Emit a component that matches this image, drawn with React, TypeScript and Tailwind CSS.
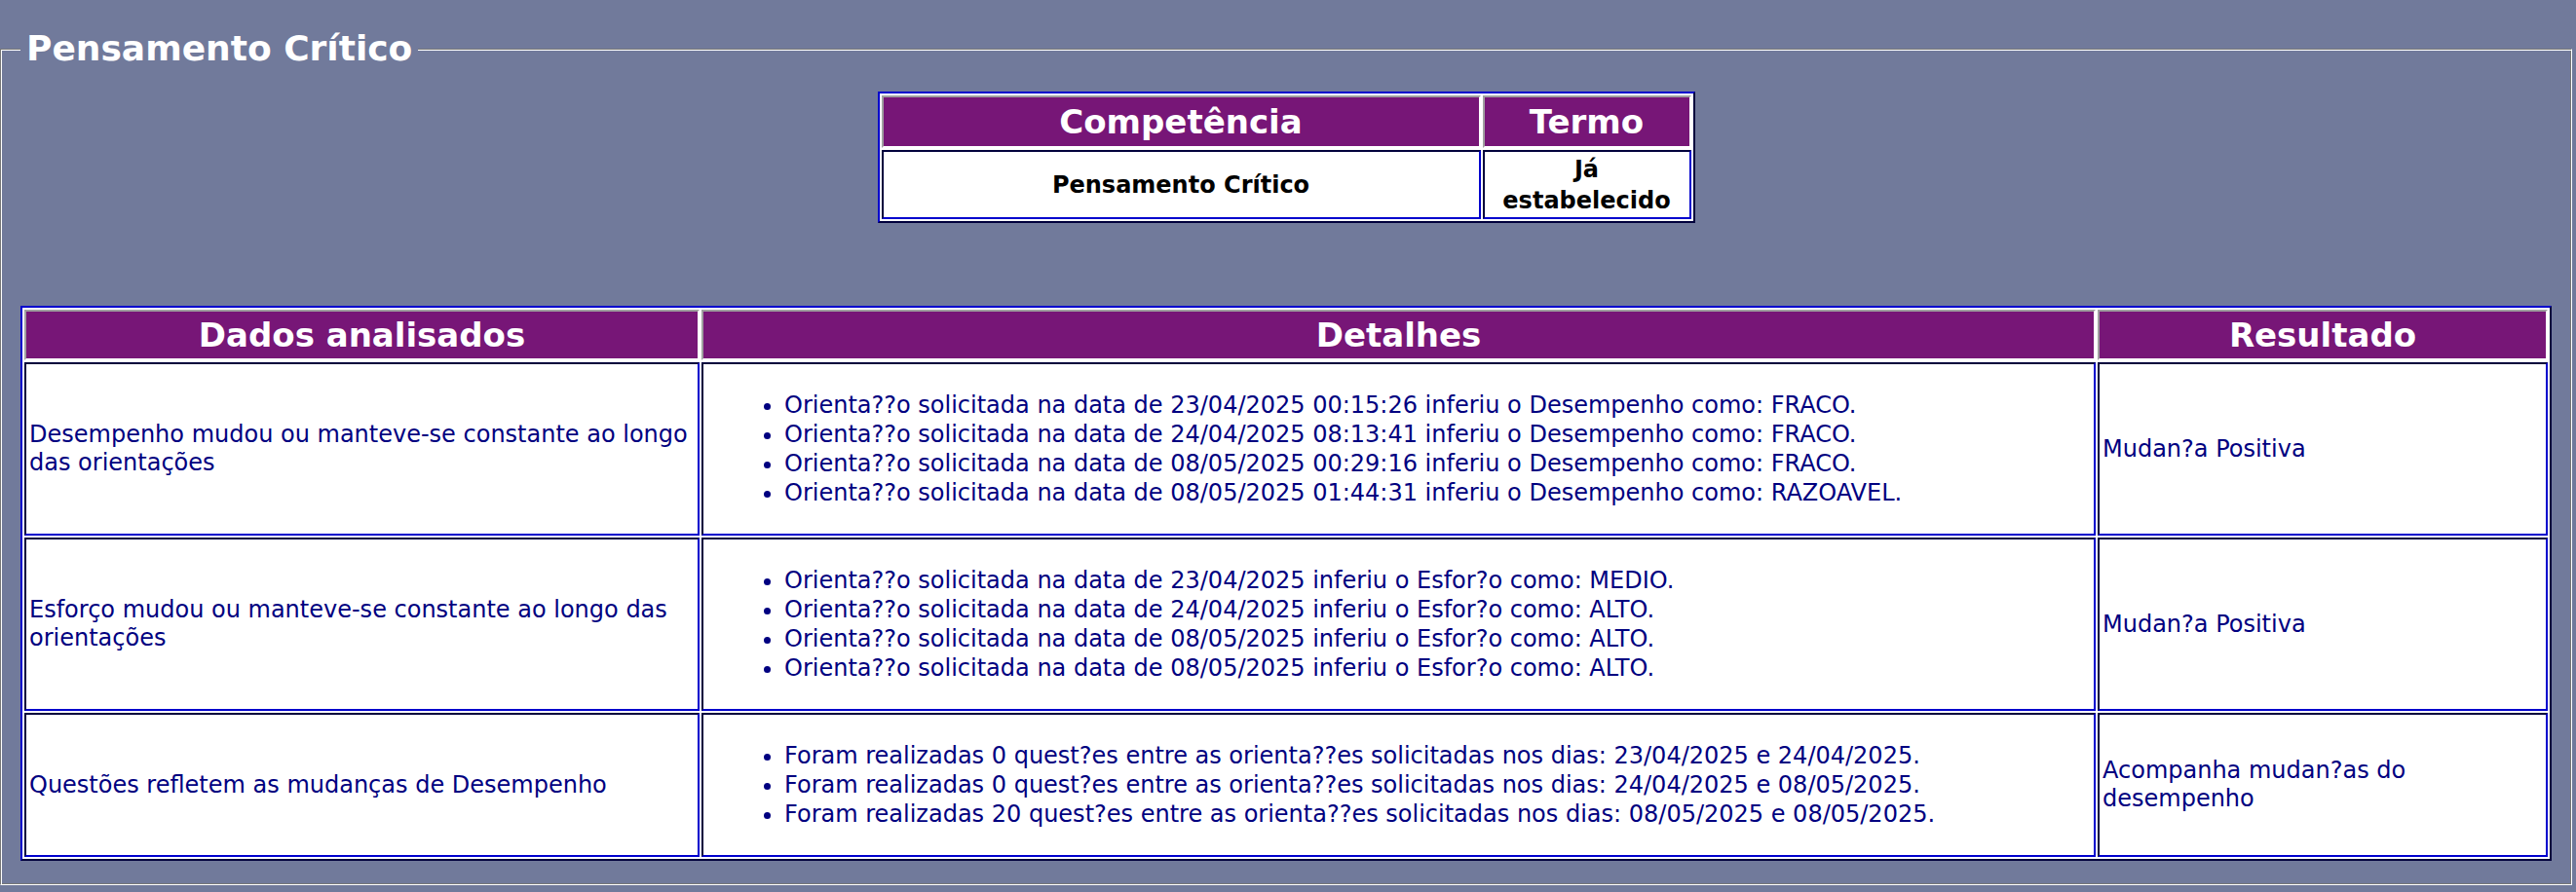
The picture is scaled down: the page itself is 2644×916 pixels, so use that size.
import React from "react";

const font = "font-['DejaVu_Sans','Verdana',sans-serif]";
const tableCls =
  "border-separate border-spacing-[2px] border-2 border-t-[#0000cd] border-l-[#0000cd] border-b-[#00003c] border-r-[#00003c] bg-white";
const thCls =
  "border-2 border-t-[#a0a0a0] border-l-[#a0a0a0] border-b-white border-r-white bg-[#771677] text-white font-bold text-[34px] leading-[40px] text-center";
const tdCls =
  "border-2 border-t-[#00003c] border-l-[#00003c] border-b-[#0000cd] border-r-[#0000cd] px-[3px] align-middle";

const rows = [
  {
    dado: "Desempenho mudou ou manteve-se constante ao longo das orientações",
    detalhes: [
      "Orienta??o solicitada na data de 23/04/2025 00:15:26 inferiu o Desempenho como: FRACO.",
      "Orienta??o solicitada na data de 24/04/2025 08:13:41 inferiu o Desempenho como: FRACO.",
      "Orienta??o solicitada na data de 08/05/2025 00:29:16 inferiu o Desempenho como: FRACO.",
      "Orienta??o solicitada na data de 08/05/2025 01:44:31 inferiu o Desempenho como: RAZOAVEL.",
    ],
    resultado: "Mudan?a Positiva",
    h: "h-[178px]",
  },
  {
    dado: "Esforço mudou ou manteve-se constante ao longo das orientações",
    detalhes: [
      "Orienta??o solicitada na data de 23/04/2025 inferiu o Esfor?o como: MEDIO.",
      "Orienta??o solicitada na data de 24/04/2025 inferiu o Esfor?o como: ALTO.",
      "Orienta??o solicitada na data de 08/05/2025 inferiu o Esfor?o como: ALTO.",
      "Orienta??o solicitada na data de 08/05/2025 inferiu o Esfor?o como: ALTO.",
    ],
    resultado: "Mudan?a Positiva",
    h: "h-[178px]",
  },
  {
    dado: "Questões refletem as mudanças de Desempenho",
    detalhes: [
      "Foram realizadas 0 quest?es entre as orienta??es solicitadas nos dias: 23/04/2025 e 24/04/2025.",
      "Foram realizadas 0 quest?es entre as orienta??es solicitadas nos dias: 24/04/2025 e 08/05/2025.",
      "Foram realizadas 20 quest?es entre as orienta??es solicitadas nos dias: 08/05/2025 e 08/05/2025.",
    ],
    resultado: "Acompanha mudan?as do desempenho",
    h: "h-[148px]",
  },
];

export default function App() {
  return (
    <div className={`min-h-screen bg-[#717a9b] pt-[28px] ${font}`}>
      <fieldset className="mr-[4px] border border-t-[#777] border-l-[#777] border-b-white border-r-white shadow-[inset_1px_1px_0_#ffffff,inset_-1px_-1px_0_#777777] px-[20px] pb-[24px]">
        <legend className="px-[6px] bg-[#717a9b] text-[36px] leading-[44px] font-bold text-white">
          Pensamento Crítico
        </legend>

        <table className={`${tableCls} mx-auto mt-[22px] w-[839px]`}>
          <thead>
            <tr>
              <th className={`${thCls} w-[615px] h-[54px]`}>Competência</th>
              <th className={`${thCls} h-[54px]`}>Termo</th>
            </tr>
          </thead>
          <tbody>
            <tr>
              <td className={`${tdCls} h-[71px] text-center text-[24px] leading-[30px] font-bold text-black`}>
                Pensamento Crítico
              </td>
              <td className={`${tdCls} h-[71px] text-center text-[24px] leading-[32px] font-bold text-black`}>
                Já
                <br />
                estabelecido
              </td>
            </tr>
          </tbody>
        </table>

        <table className={`${tableCls} mt-[85px] w-full`}>
          <thead>
            <tr>
              <th className={`${thCls} w-[693px] h-[52px]`}>Dados analisados</th>
              <th className={`${thCls} w-[1431px] h-[52px]`}>Detalhes</th>
              <th className={`${thCls} h-[52px]`}>Resultado</th>
            </tr>
          </thead>
          <tbody className="text-[24px] leading-[29px] text-[#000080]">
            {rows.map((r) => (
              <tr key={r.dado}>
                <td className={`${tdCls} ${r.h}`}>{r.dado}</td>
                <td className={`${tdCls} ${r.h}`}>
                  <ul className="list-disc pl-[80px] my-[22px] leading-[30px]">
                    {r.detalhes.map((d, i) => (
                      <li key={i}>{d}</li>
                    ))}
                  </ul>
                </td>
                <td className={`${tdCls} ${r.h}`}>{r.resultado}</td>
              </tr>
            ))}
          </tbody>
        </table>
      </fieldset>
    </div>
  );
}
